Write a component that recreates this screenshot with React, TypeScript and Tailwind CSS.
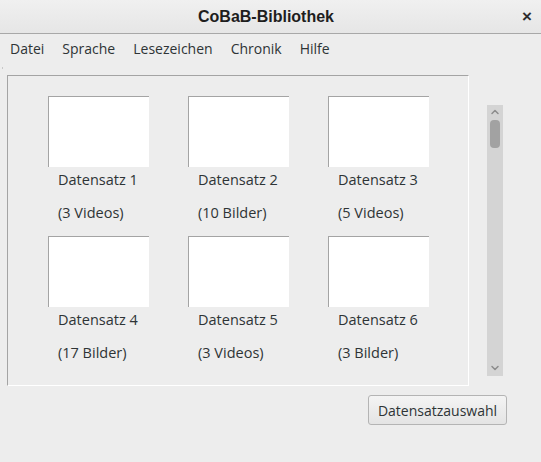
import { ChevronUp, ChevronDown } from 'lucide-react'

const items = [
  { name: 'Datensatz 1', info: '(3 Videos)' },
  { name: 'Datensatz 2', info: '(10 Bilder)' },
  { name: 'Datensatz 3', info: '(5 Videos)' },
  { name: 'Datensatz 4', info: '(17 Bilder)' },
  { name: 'Datensatz 5', info: '(3 Videos)' },
  { name: 'Datensatz 6', info: '(3 Bilder)' },
]

const menus = ['Datei', 'Sprache', 'Lesezeichen', 'Chronik', 'Hilfe']

function Tile({ name, info }: { name: string; info: string }) {
  return (
    <div className="flex flex-col w-[101px]">
      <div className="h-[71px] bg-white border-t border-l border-[#a4a4a4]" />
      <span className="pl-[10px] mt-[4px] leading-[18px] whitespace-nowrap">{name}</span>
      <span className="pl-[10px] mt-[15px] leading-[18px] whitespace-nowrap">{info}</span>
    </div>
  )
}

export default function App() {
  return (
    <div className="w-[541px] h-[462px] bg-[#ededed] text-[#2e3436] font-['Open_Sans',sans-serif] text-[14.5px] overflow-hidden">
      {/* title bar */}
      <div className="relative h-[34px] flex items-center justify-center bg-gradient-to-b from-[#f0f0f0] to-[#e6e6e6] border-b border-[#a8a8a8]">
        <span className="font-['Liberation_Sans',sans-serif] font-bold text-[16px] text-[#1e1e1e] mr-[9px]">CoBaB-Bibliothek</span>
        <span className="absolute right-[9px] top-[4px] font-['Liberation_Sans',sans-serif] font-bold text-[17px] text-[#2e2e2e]">×</span>
      </div>

      {/* menu bar */}
      <div className="flex h-[29px] items-center pl-[10px] gap-[18px] text-[14px]">
        {menus.map((m) => (
          <span key={m}>{m}</span>
        ))}
      </div>

      <div className="relative flex pl-[7px] pt-[12px]">
        <span className="absolute left-[2px] top-[4px] w-px h-[2px] bg-[#c8c8c8]" />
        <div className="w-[462px] h-[311px] border-t border-l border-[#a4a4a4] border-r border-b border-r-white border-b-white pl-[40px] pt-[20px]">
          <div className="grid grid-cols-[101px_101px_101px] gap-x-[39px] gap-y-[14px]">
            {items.map((it) => (
              <Tile key={it.name} name={it.name} info={it.info} />
            ))}
          </div>
        </div>

        {/* scrollbar */}
        <div className="ml-[18px] mt-[30px] w-[16px] h-[271px] bg-[#d4d4d4] flex flex-col items-center">
          <ChevronUp className="w-[12px] h-[12px] mt-[1px] text-[#8c8c8c]" strokeWidth={3} />
          <div className="w-[10px] h-[28px] mt-[2px] rounded-[4px] bg-[#a2a2a2]" />
          <div className="flex-1" />
          <ChevronDown className="w-[12px] h-[12px] mb-[2px] text-[#8c8c8c]" strokeWidth={3} />
        </div>
      </div>

      <div className="flex justify-end pr-[34px] mt-[9px]">
        <button className="w-[139px] h-[30px] rounded-[3px] border border-[#b4b4b4] bg-gradient-to-b from-[#f4f4f4] to-[#e4e4e4] text-[14px] text-[#2e3436]">
          Datensatzauswahl
        </button>
      </div>
    </div>
  )
}
